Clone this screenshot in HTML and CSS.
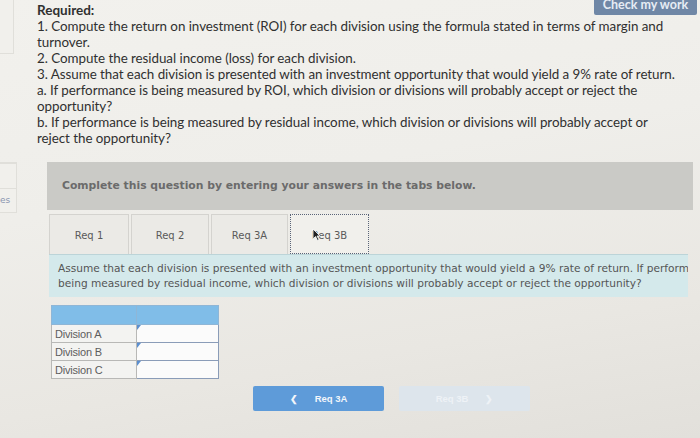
FILE: index.html
```html
<!DOCTYPE html>
<html>
<head>
<meta charset="utf-8">
<link rel="stylesheet" href="styles.css">
</head>
<body>
<div class="page">
  <aside class="side">
    <div class="side-box top"></div>
    <div class="side-box mid">
      <div class="side-row"></div>
      <div class="side-row"><span class="side-text">es</span></div>
    </div>
  </aside>
  <main class="main">
    <div class="req-head">
      <div class="req-title">Required:</div>
      <button class="check">Check my work</button>
    </div>
    <div class="req-list">
      <p>1. Compute the return on investment (ROI) for each division using the formula stated in terms of margin and<br>turnover.</p>
      <p>2. Compute the residual income (loss) for each division.</p>
      <p>3. Assume that each division is presented with an investment opportunity that would yield a 9% rate of return.</p>
      <p>a. If performance is being measured by ROI, which division or divisions will probably accept or reject the<br>opportunity?</p>
      <p>b. If performance is being measured by residual income, which division or divisions will probably accept or<br>reject the opportunity?</p>
    </div>
    <section class="question">
      <div class="bar">Complete this question by entering your answers in the tabs below.</div>
      <div class="tabs">
        <div class="tab t1">Req 1</div>
        <div class="tab t2">Req 2</div>
        <div class="tab t3">Req 3A</div>
        <div class="tab t4 active">Req 3B<svg class="cursor" width="9" height="13" viewBox="0 0 9 13"><path d="M1 1 L1 11 L3.5 8.5 L5.5 12.5 L7 11.8 L5 8 L8 8 Z" fill="#222" stroke="#fff" stroke-width="0.8"/></svg></div>
      </div>
      <div class="panel">
        <div class="panel-text">Assume that each division is presented with an investment opportunity that would yield a 9% rate of return. If performance is<br>being measured by residual income, which division or divisions will probably accept or reject the opportunity?</div>
      </div>
      <table class="grid">
        <tr class="head"><td class="lab"></td><td class="inp"></td></tr>
        <tr><td class="lab">Division A</td><td class="inp"><span class="flag"></span></td></tr>
        <tr><td class="lab">Division B</td><td class="inp"><span class="flag"></span></td></tr>
        <tr><td class="lab">Division C</td><td class="inp"><span class="flag"></span></td></tr>
      </table>
      <div class="nav">
        <button class="navbtn prev"><span class="chev">&#10094;</span>Req 3A</button>
        <button class="navbtn next">Req 3B<span class="chev r">&#10095;</span></button>
      </div>
    </section>
  </main>
</div>
</body>
</html>
```
FILE: styles.css
```css
html, body {
  margin: 0;
  padding: 0;
}
body {
  width: 700px;
  height: 438px;
  overflow: hidden;
  background: linear-gradient(170deg, #f2f1ed 0%, #efeeea 40%, #e9e7e2 75%, #e2e0db 100%);
  font-family: "Lato", "Liberation Sans", sans-serif;
}
.page {
  display: flex;
  height: 438px;
}
.side {
  width: 17px;
  flex: none;
  display: flex;
  flex-direction: column;
}
.side-box {
  border: 1px solid #e0dfda;
  border-left: none;
  background: #f1f0ec;
}
.side-box.top {
  width: 13px;
  height: 53px;
  border-top: none;
}
.side-box.mid {
  margin-top: 108px;
  height: 49px;
  display: flex;
  flex-direction: column;
  justify-content: flex-end;
}
.side-row {
  height: 24px;
  border-top: 1px solid #e0dfda;
  display: flex;
  align-items: center;
}
.side-text {
  font-family: "DejaVu Sans", sans-serif;
  font-size: 9px;
  color: #8a96b0;
  margin-left: 0;
}
.main {
  flex: 1;
  padding-left: 20px;
  padding-right: 3px;
  padding-top: 2px;
  min-width: 0;
}
.req-head {
  display: flex;
  justify-content: space-between;
  align-items: flex-start;
  height: 16px;
}
.req-title {
  font-weight: 700;
  font-size: 13.5px;
  color: #303030;
  line-height: 17px;
}
.check {
  margin-top: -14px;
  width: 103px;
  height: 27px;
  border: none;
  border-radius: 2px;
  background: #6f87a6;
  color: #e6ecf4;
  font-family: "Lato", sans-serif;
  font-weight: 700;
  font-size: 12.5px;
  padding: 6px 0 0 0;
  line-height: 13px;
  text-align: center;
  display: block;
}
.req-list p {
  margin: 0;
  font-size: 13.4px;
  line-height: 16px;
  color: #303030;
  letter-spacing: -0.05px;
}
.question {
  margin-left: 10px;
  margin-right: 4px;
  margin-top: 16px;
}
.bar {
  height: 48px;
  background: #cacac6;
  display: flex;
  align-items: center;
  padding-left: 15px;
  font-family: "DejaVu Sans", sans-serif;
  font-weight: 700;
  font-size: 10.8px;
  color: #6b6b6b;
  padding-bottom: 2px;
  box-sizing: border-box;
}
.tabs {
  display: flex;
  gap: 2px;
  margin-top: 4px;
  margin-left: 2px;
  height: 40px;
}
.tab {
  box-sizing: border-box;
  height: 40px;
  border: 1px solid #d4d3cf;
  border-bottom: none;
  background: #ebeae6;
  display: flex;
  align-items: center;
  justify-content: center;
  font-family: "DejaVu Sans", sans-serif;
  font-size: 10px;
  color: #5a5a5a;
  padding-top: 2px;
}
.t1 { width: 80px; }
.t2 { width: 78px; }
.t3 { width: 77px; }
.t4 { width: 79px; }
.tab.active {
  background: #f1f0ec;
  border: 1px dotted #5a6478;
  position: relative;
}
.cursor {
  position: absolute;
  left: 21px;
  top: 13px;
}
.panel {
  margin-left: 2px;
  width: 639px;
  height: 43px;
  background: #d4e9eb;
  border-top: 1px solid #bcd4d8;
  box-sizing: border-box;
  overflow: hidden;
}
.panel-text {
  width: 800px;
  padding: 6px 0 0 9px;
  font-family: "DejaVu Sans", sans-serif;
  font-size: 10.6px;
  line-height: 15px;
  color: #555;
  white-space: nowrap;
}
.grid {
  margin-top: 8px;
  margin-left: 4px;
  border-collapse: collapse;
  font-family: "Liberation Sans", sans-serif;
}
.grid td {
  height: 18px;
  padding: 0;
  box-sizing: border-box;
}
.grid .head td {
  background: #80bde8;
  height: 19px;
  border: 1px solid #8fb6d6;
}
.grid .lab {
  width: 85px;
  border: 1px solid #b8b8b6;
  background: #f3f3f1;
  font-size: 11px;
  color: #5d5d5d;
  padding-left: 3px;
  letter-spacing: -0.2px;
}
.grid .inp {
  width: 82px;
  border: 1.5px solid #8a9cb8;
  background: #fbfbfb;
  position: relative;
}
.flag {
  position: absolute;
  left: 0;
  top: 0;
  width: 0;
  height: 0;
  border-top: 5px solid #5b8fd0;
  border-right: 4px solid transparent;
}
.nav {
  display: flex;
  gap: 15px;
  margin-top: 7px;
  margin-left: 206px;
}
.navbtn {
  width: 131px;
  height: 25px;
  border: none;
  border-radius: 2px;
  font-family: "Liberation Sans", sans-serif;
  font-weight: 700;
  font-size: 9.5px;
  display: flex;
  align-items: center;
  justify-content: center;
  padding: 0;
}
.prev {
  background: #5e9bd9;
  color: #f2f6fb;
}
.next {
  background: #dde5ec;
  color: #eef2f6;
}
.chev {
  font-size: 9px;
  margin-right: 17px;
}
.chev.r {
  margin-right: 0;
  margin-left: 17px;
}
```
